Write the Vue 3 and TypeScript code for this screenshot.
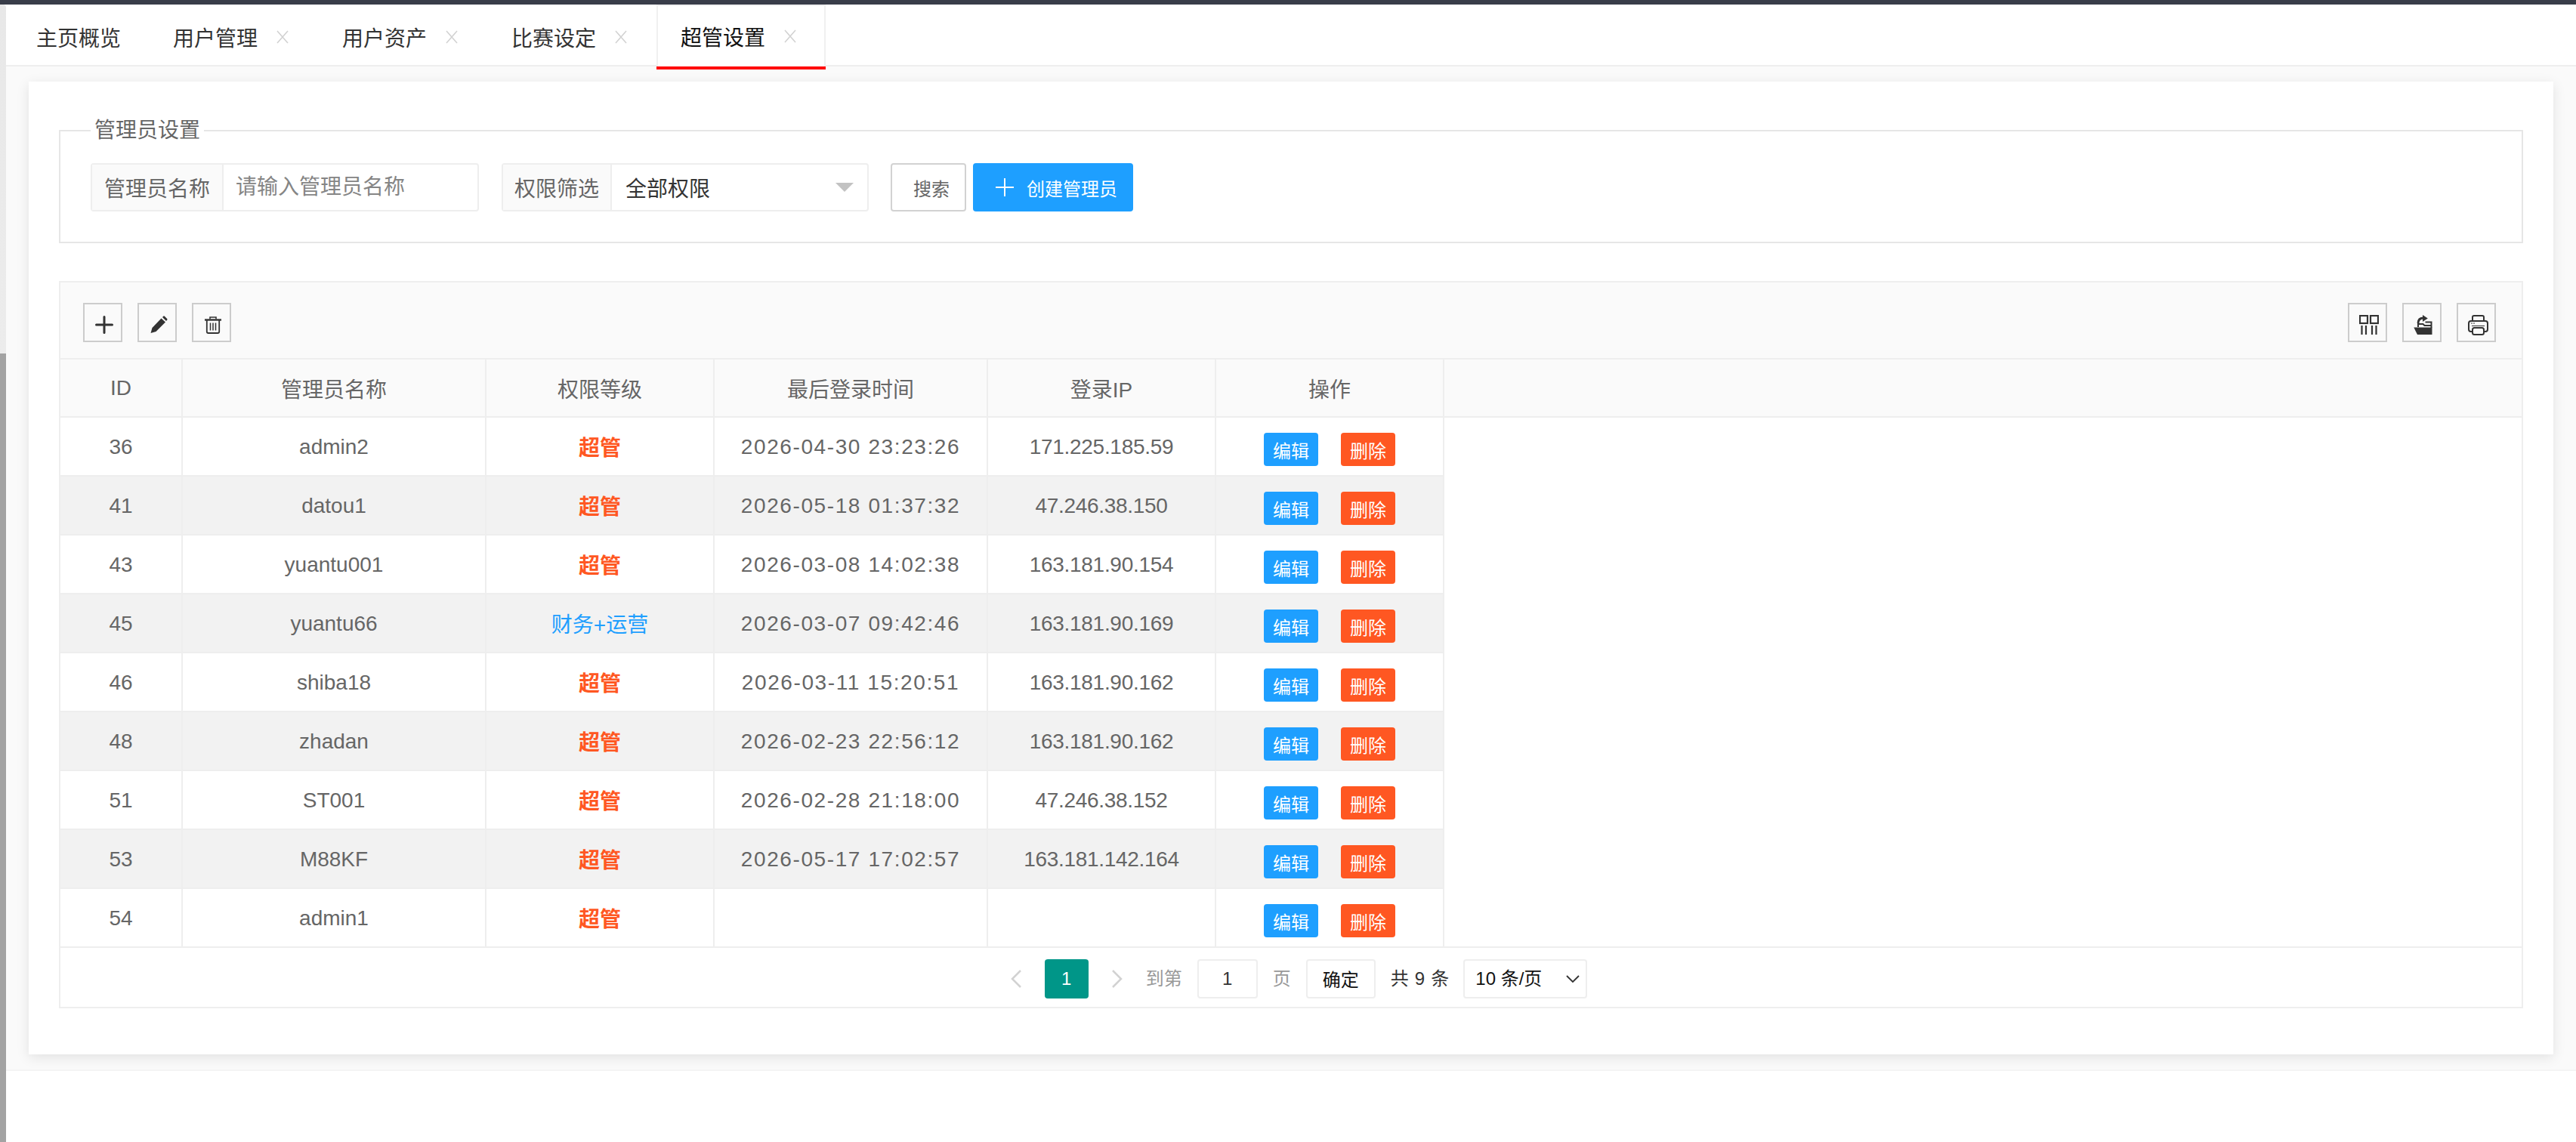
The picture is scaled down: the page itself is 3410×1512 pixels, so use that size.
<script setup lang="ts">
interface AdminRow {
  id: number
  name: string
  level: string
  time: string
  ip: string
}

const tabs = ['用户管理', '用户资产', '比赛设定', '超管设置']

const rows: AdminRow[] = [
  { id: 36, name: 'admin2', level: '超管', time: '2026-04-30 23:23:26', ip: '171.225.185.59' },
  { id: 41, name: 'datou1', level: '超管', time: '2026-05-18 01:37:32', ip: '47.246.38.150' },
  { id: 43, name: 'yuantu001', level: '超管', time: '2026-03-08 14:02:38', ip: '163.181.90.154' },
  { id: 45, name: 'yuantu66', level: '财务+运营', time: '2026-03-07 09:42:46', ip: '163.181.90.169' },
  { id: 46, name: 'shiba18', level: '超管', time: '2026-03-11 15:20:51', ip: '163.181.90.162' },
  { id: 48, name: 'zhadan', level: '超管', time: '2026-02-23 22:56:12', ip: '163.181.90.162' },
  { id: 51, name: 'ST001', level: '超管', time: '2026-02-28 21:18:00', ip: '47.246.38.152' },
  { id: 53, name: 'M88KF', level: '超管', time: '2026-05-17 17:02:57', ip: '163.181.142.164' },
  { id: 54, name: 'admin1', level: '超管', time: '', ip: '' },
]
</script>

<template>
  <div class="page">
    <div class="topbar"></div>
    <div class="body">
      <div class="strip"></div>
      <div class="main">
        <div class="tabs">
          <div class="tab tab-home">主页概览</div>
          <div
            v-for="(tab, i) in tabs"
            :key="tab"
            class="tab"
            :class="{ active: i === tabs.length - 1 }"
          >
            <span>{{ tab }}</span>
            <svg class="tab-close" width="18" height="18" viewBox="0 0 18 18">
              <path d="M2 1l14 16M16 1L2 17" fill="none" stroke="#d2d2d2" stroke-width="1.6" />
            </svg>
          </div>
        </div>

        <div class="content">
          <div class="card">
            <fieldset class="filter">
              <legend>管理员设置</legend>
              <div class="filter-row">
                <div class="group group-name">
                  <div class="group-label">管理员名称</div>
                  <input class="group-input" placeholder="请输入管理员名称" />
                </div>
                <div class="group group-level">
                  <div class="group-label">权限筛选</div>
                  <div class="group-select">
                    <span>全部权限</span>
                    <i class="caret"></i>
                  </div>
                </div>
                <button class="btn-search">搜索</button>
                <button class="btn-create">
                  <svg width="24" height="24" viewBox="0 0 24 24">
                    <path d="M12 0v24M0 12h24" fill="none" stroke="#fff" stroke-width="2" />
                  </svg>
                  <span>创建管理员</span>
                </button>
              </div>
            </fieldset>

            <div class="table-box">
              <div class="toolbar">
                <div class="tools">
                  <div class="tool">
                    <svg width="24" height="24" viewBox="0 0 24 24">
                      <path d="M12 1.5v21M1.5 12h21" fill="none" stroke="#333" stroke-width="3" stroke-linecap="round" />
                    </svg>
                  </div>
                  <div class="tool">
                    <svg width="24" height="24" viewBox="0 0 24 24">
                      <path d="M1.5 23l2-7L15.5 3.5l5.5 5L8.5 21z" fill="#333" />
                      <path d="M17 2l1.2-1.2a1.2 1.2 0 011.7 0l3.2 3.2a1.2 1.2 0 010 1.7L22 7z" fill="#333" />
                    </svg>
                  </div>
                  <div class="tool">
                    <svg width="24" height="24" viewBox="0 0 24 24" fill="none" stroke="#333">
                      <path d="M1 5.5h22" stroke-width="2.4" />
                      <path d="M8 4.5V2h8v2.5" stroke-width="1.6" />
                      <path d="M3.8 6v15a2 2 0 002 2h12.4a2 2 0 002-2V6" stroke-width="1.8" />
                      <path d="M8.5 9.5v10M12 9.5v10M15.5 9.5v10" stroke-width="1.5" />
                    </svg>
                  </div>
                </div>
                <div class="tools">
                  <div class="tool">
                    <svg width="26" height="26" viewBox="0 0 26 26" fill="none" stroke="#333" stroke-width="2.2">
                      <rect x="1" y="1" width="10" height="10" />
                      <rect x="15" y="1" width="10" height="10" />
                      <path d="M3.5 14v12M9 14v12M17 14v12M22.5 14v12" />
                    </svg>
                  </div>
                  <div class="tool">
                    <svg width="26" height="26" viewBox="0 0 26 26">
                      <path d="M0.3 16.5H24.5V26H5z" fill="#333" />
                      <path d="M6 16v-4h6.5l2 2H23.5v3M15.5 9.5h8v4" fill="none" stroke="#333" stroke-width="2" />
                      <path d="M6 11C6 6 9 4 13.5 4" fill="none" stroke="#333" stroke-width="2.8" />
                      <path d="M12 0l6.8 4.5L12 9z" fill="#333" />
                    </svg>
                  </div>
                  <div class="tool">
                    <svg width="27" height="27" viewBox="0 0 27 27" fill="none" stroke="#333">
                      <path d="M5 22H4a3 3 0 01-3-3v-8a3 3 0 013-3h19a3 3 0 013 3v8a3 3 0 01-3 3h-1.500" stroke-width="2" />
                      <path d="M6 8V3a2 2 0 012-2h11a2 2 0 012 2v5" stroke-width="2" />
                      <rect x="6" y="17" width="15" height="9" rx="2.500" stroke-width="2" />
                      <path d="M5 14.500h17M4 11h2M7 11h2" stroke-width="1" />
                    </svg>
                  </div>
                </div>
              </div>

              <div class="row head">
                <div class="cell">ID</div>
                <div class="cell">管理员名称</div>
                <div class="cell">权限等级</div>
                <div class="cell">最后登录时间</div>
                <div class="cell">登录IP</div>
                <div class="cell">操作</div>
              </div>

              <div class="rows">
                <div v-for="row in rows" :key="row.id" class="row">
                  <div class="cell cell-text">{{ row.id }}</div>
                  <div class="cell cell-text">{{ row.name }}</div>
                  <div class="cell">
                    <span :class="row.level === '超管' ? 'lv-super' : 'lv-other'">{{ row.level }}</span>
                  </div>
                  <div class="cell cell-text cell-time">{{ row.time }}</div>
                  <div class="cell cell-text cell-ip">{{ row.ip }}</div>
                  <div class="cell cell-ops">
                    <button class="btn-xs btn-edit">编辑</button>
                    <button class="btn-xs btn-del">删除</button>
                  </div>
                </div>
              </div>

              <div class="pager">
                <svg class="chev" width="15" height="24" viewBox="0 0 15 24">
                  <path d="M13 1L2 12l11 11" fill="none" stroke="#d2d2d2" stroke-width="2.500" />
                </svg>
                <div class="page-cur">1</div>
                <svg class="chev" width="15" height="24" viewBox="0 0 15 24">
                  <path d="M2 1l11 11L2 23" fill="none" stroke="#d2d2d2" stroke-width="2.500" />
                </svg>
                <span class="pager-muted pager-to">到第</span>
                <input class="page-input" value="1" />
                <span class="pager-muted">页</span>
                <button class="page-ok">确定</button>
                <span class="pager-total">共 9 条</span>
                <div class="page-size">
                  <span>10 条/页</span>
                  <svg width="18" height="10" viewBox="0 0 18 10">
                    <path d="M1 1l8 8 8-8" fill="none" stroke="#333" stroke-width="1.800" />
                  </svg>
                </div>
              </div>
            </div>
          </div>
        </div>
      </div>
    </div>
  </div>
</template>

<style scoped>
.page {
  width: 3410px;
  height: 1512px;
  overflow: hidden;
  background: #fff;
  font-family: "Liberation Sans", "Noto Sans CJK SC", sans-serif;
  font-size: 28px;
  color: #666;
}

.topbar {
  height: 6px;
  background: #393d49;
}

.body {
  display: flex;
  height: 1506px;
}

.strip {
  flex: none;
  width: 8px;
  background: linear-gradient(#e8e8e8 0, #ececec 462px, #a3a3a3 462px);
  border-top-right-radius: 4px;
}

.main {
  flex: 1;
  min-width: 0;
}

.tabs {
  display: flex;
  height: 82px;
  border-bottom: 2px solid #eee;
  box-sizing: border-box;
  background: #fff;
  color: #333;
}

.tab {
  position: relative;
  display: flex;
  align-items: center;
  justify-content: space-between;
  box-sizing: border-box;
  width: 224px;
  padding: 6px 38px 0 32px;
  white-space: nowrap;
}

.tab-home {
  width: 189px;
  padding-left: 40px;
  padding-right: 37px;
  justify-content: flex-start;
}

.tab.active {
  height: 82px;
  padding-top: 0;
  padding-left: 30px;
  padding-right: 36px;
  color: #111;
  background: #fff;
  border-top: 2px solid #f0f0f0;
  border-left: 2px solid #f0f0f0;
  border-right: 2px solid #f0f0f0;
}

.tab.active::after {
  content: "";
  position: absolute;
  left: -2px;
  right: -2px;
  top: 80px;
  height: 4px;
  background: #f00;
}

.content {
  box-sizing: border-box;
  height: 1330px;
  padding: 20px 30px 0;
  background: #fafafa;
  border-bottom: 2px solid #f4f4f4;
}

.card {
  box-sizing: border-box;
  height: 1288px;
  padding: 45px 40px 0;
  background: #fff;
  box-shadow: 0 4px 16px rgba(0, 0, 0, 0.1);
}

.filter {
  box-sizing: border-box;
  height: 169px;
  margin: 0;
  padding: 23px 40px 0;
  border: 2px solid #e6e6e6;
  min-width: 0;
}

.filter legend {
  padding: 0 5px;
  line-height: 40px;
  font-size: 28px;
  color: #666;
}

.filter-row {
  display: flex;
  height: 64px;
}

.group {
  display: flex;
  box-sizing: border-box;
  height: 64px;
  border: 2px solid #eee;
  border-radius: 4px;
}

.group-name {
  width: 514px;
}

.group-level {
  width: 486px;
  margin-left: 30px;
}

.group-label {
  display: flex;
  align-items: center;
  justify-content: center;
  box-sizing: border-box;
  background: #fafafa;
  border-right: 2px solid #eee;
}

.group-name .group-label {
  width: 174px;
}

.group-level .group-label {
  width: 144px;
}

.group-input {
  flex: 1;
  min-width: 0;
  border: 0;
  outline: 0;
  padding: 0 0 0 16px;
  font: inherit;
  color: #333;
  background: transparent;
}

.group-input::placeholder {
  color: #858585;
}

.group-select {
  flex: 1;
  display: flex;
  align-items: center;
  justify-content: space-between;
  padding: 0 18px;
  color: #333;
}

.caret {
  width: 0;
  height: 0;
  border-left: 12px solid transparent;
  border-right: 12px solid transparent;
  border-top: 12px solid #c2c2c2;
}

.btn-search {
  box-sizing: border-box;
  width: 100px;
  height: 64px;
  margin-left: 29px;
  padding: 0 0 0 8px;
  background: #fff;
  border: 2px solid #d2d2d2;
  border-radius: 4px;
  font: inherit;
  font-size: 24px;
  color: #666;
}

.btn-create {
  display: flex;
  align-items: center;
  gap: 17px;
  box-sizing: border-box;
  width: 212px;
  height: 64px;
  margin-left: 9px;
  padding: 0 0 0 30px;
  background: #1e9fff;
  border: 0;
  border-radius: 4px;
  font: inherit;
  font-size: 24px;
  color: #fff;
}

.table-box {
  box-sizing: border-box;
  height: 963px;
  margin-top: 50px;
  border: 2px solid #eee;
}

.toolbar {
  display: flex;
  justify-content: space-between;
  box-sizing: border-box;
  height: 102px;
  padding: 27px 34px 0 30px;
  background: #fafafa;
  border-bottom: 2px solid #eee;
}

.tools {
  display: flex;
  gap: 20px;
}

.tool {
  display: flex;
  align-items: center;
  justify-content: center;
  box-sizing: border-box;
  width: 52px;
  height: 52px;
  padding: 6px 0 0 4px;
  border: 2px solid #ccc;
}

.row {
  display: grid;
  grid-template-columns: 162px 402px 302px 362px 302px 302px;
  width: 1832px;
  height: 78px;
  box-sizing: border-box;
  border-bottom: 2px solid #eee;
}

.rows .row:nth-child(even) {
  background: #f2f2f2;
}

.head {
  width: auto;
  height: 77px;
  background: #fafafa;
}

.rows {
  border-bottom: 2px solid #eee;
}

.rows .row:last-child {
  height: 76px;
  border-bottom: 0;
}

.cell {
  display: flex;
  align-items: center;
  justify-content: center;
  box-sizing: border-box;
  border-right: 2px solid #eee;
  white-space: nowrap;
}

.cell-text {
  padding-top: 2px;
}

.cell-time {
  letter-spacing: 1.6px;
}

.cell-ip {
  letter-spacing: -0.3px;
}

.cell-ops {
  gap: 30px;
}

.lv-super {
  font-weight: 700;
  color: #ff5722;
}

.lv-other {
  color: #1e9fff;
}

.btn-xs {
  width: 72px;
  height: 44px;
  margin-top: 8px;
  padding: 0;
  border: 0;
  border-radius: 4px;
  font: inherit;
  font-size: 24px;
  color: #fff;
}

.btn-edit {
  background: #1e9fff;
}

.btn-del {
  background: #ff5722;
}

.pager {
  display: flex;
  align-items: flex-start;
  justify-content: center;
  box-sizing: border-box;
  height: 78px;
  padding: 15px 0 0 21px;
  font-size: 24px;
  color: #333;
  line-height: 52px;
}

.chev {
  margin-top: 14px;
}

.page-cur {
  width: 58px;
  height: 52px;
  margin: 0 30px;
  text-align: center;
  background: #009688;
  border-radius: 4px;
  color: #fff;
}

.pager-muted {
  color: #999;
}

.pager-to {
  margin-left: 31px;
}

.page-input {
  box-sizing: border-box;
  width: 80px;
  height: 52px;
  margin: 0 20px;
  padding: 0;
  border: 2px solid #eee;
  border-radius: 4px;
  outline: 0;
  text-align: center;
  font: inherit;
  color: #333;
}

.page-ok {
  box-sizing: border-box;
  width: 92px;
  height: 52px;
  margin-left: 20px;
  padding: 0;
  background: #fff;
  border: 2px solid #eee;
  border-radius: 4px;
  font: inherit;
  color: #111;
}

.pager-total {
  margin-left: 20px;
  word-spacing: 1.5px;
}

.page-size {
  display: flex;
  align-items: center;
  justify-content: space-between;
  box-sizing: border-box;
  width: 164px;
  height: 52px;
  margin-left: 19px;
  padding: 0 8px 0 14px;
  border: 2px solid #eee;
  border-radius: 4px;
  color: #111;
}
</style>

<style>
html,
body {
  background: #fff;
}
</style>
